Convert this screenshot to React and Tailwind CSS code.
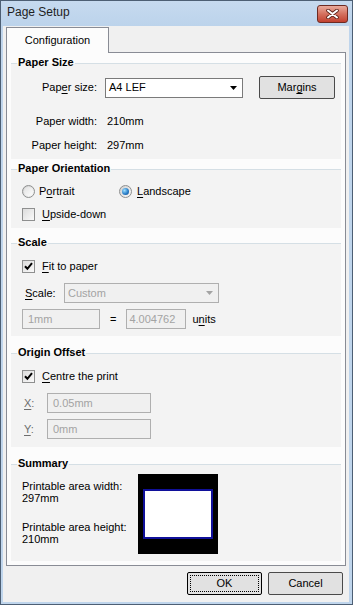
import React from "react"

const U = ({ children }) => <span className="underline decoration-1 underline-offset-[2px]">{children}</span>

const CheckBox = ({ checked }) => (
  <span className="flex h-[13px] w-[13px] shrink-0 items-center justify-center border border-[#8e8f8f] bg-white">
    <span className="flex h-[11px] w-[11px] items-center justify-center bg-gradient-to-br from-[#dcdcdc] to-[#fafafa]">
      {checked && (
        <svg width="9" height="9" viewBox="0 0 9 9">
          <path d="M1 4.2 L3.4 6.8 L8 1.2" fill="none" stroke="#000" strokeWidth="2" />
        </svg>
      )}
    </span>
  </span>
)

const Radio = ({ checked }) => (
  <span className="flex h-[13px] w-[13px] shrink-0 items-center justify-center rounded-full border border-[#8e8f8f] bg-gradient-to-br from-[#cfcfcf] to-[#fafafa]">
    {checked ? (
      <span className="h-[7px] w-[7px] rounded-full bg-[radial-gradient(circle_at_35%_35%,#9fe0ff,#2a7fc9_55%,#114a8a)]" />
    ) : (
      <span className="h-[9px] w-[9px] rounded-full bg-gradient-to-br from-[#e2e2e2] to-[#fdfdfd]" />
    )}
  </span>
)

const Group = ({ title, className, children }) => (
  <fieldset className={`min-w-0 border-t border-[#d5dfe5] bg-[#f3f3f3] ${className}`}>
    <legend className="ml-[6px] px-[1px] pb-[2px] text-[11px] leading-[13px] font-bold">{title}</legend>
    {children}
  </fieldset>
)

const Select = ({ value, disabled, className }) => (
  <div
    className={`flex h-[20px] items-center justify-between border ${
      disabled ? "border-[#afafaf] bg-[#f0f0f0] text-[#a3a3a3]" : "border-[#7a7a7a] bg-white text-black"
    } ${className}`}
  >
    <span className="pl-[3px]">{value}</span>
    <svg width="7" height="4" className="mr-[5px]">
      <path d="M0 0h7L3.5 4z" fill={disabled ? "#a3a3a3" : "#000"} />
    </svg>
  </div>
)

const TextBox = ({ value, className }) => (
  <div className={`flex h-[20px] items-center border border-[#afafaf] bg-[#f0f0f0] text-[#a3a3a3] ${className}`}>{value}</div>
)

const Button = ({ children, isDefault }) => (
  <div
    className={`flex h-[23px] w-[75px] items-center justify-center rounded-[2px] border bg-[#e1e1e1] ${
      isDefault ? "border-black p-[2px]" : "border-[#4a4a4a]"
    }`}
  >
    {isDefault ? (
      <div className="flex h-full w-full items-center justify-center border border-dotted border-black">{children}</div>
    ) : (
      children
    )}
  </div>
)

export default function App() {
  return (
    <div className="flex h-[605px] w-[353px] flex-col border border-[#4d5f74] bg-[#bfd5ec] font-['Liberation_Sans',Arial,sans-serif] text-[11px] text-black">
      {/* Title bar */}
      <div className="flex h-[25px] shrink-0 items-start justify-between bg-gradient-to-b from-[#c6daef] to-[#bcd3eb]">
        <span className="pl-[6px] pt-[4px] text-[12px] leading-[15px] text-[#1e1e1e]">Page Setup</span>
        <div className="mr-[4px] mt-[4px] flex h-[18px] w-[31px] items-center justify-center rounded-[3px] border border-[#6d2a22] bg-gradient-to-b from-[#e9aa9c] via-[#d4705e] to-[#c2402f]">
          <svg width="13" height="10" viewBox="0 0 13 10">
            <path d="M2 1.5 L11 8.5 M11 1.5 L2 8.5" stroke="#5b2119" strokeWidth="3.6" strokeLinecap="round" />
            <path d="M2 1.5 L11 8.5 M11 1.5 L2 8.5" stroke="#fff" strokeWidth="2" strokeLinecap="round" />
          </svg>
        </div>
      </div>

      {/* Client area */}
      <div className="mb-[2px] ml-[2px] mr-[3px] flex flex-1 flex-col bg-[#f0f0f0] px-[3px] pt-[1px]">
        {/* Tab strip */}
        <div className="relative z-10 flex h-[26px] w-[103px] items-center justify-center border-x border-t border-[#898c95] bg-[#fcfcfc]">
          Configuration
        </div>

        {/* Tab panel */}
        <div className="-mt-px flex h-[514px] flex-col border border-[#898c95] bg-[#fcfcfc] px-[4px] pt-[3px]">
          <Group title="Paper Size" className="h-[103px]">
            <div className="mt-[5px] flex h-[23px] items-center">
              <span className="w-[86px] text-right">
                Pap<U>e</U>r size:
              </span>
              <Select value="A4 LEF" className="ml-[8px] w-[138px]" />
              <div className="ml-[16px]">
                <div className="flex h-[23px] w-[76px] items-center justify-center rounded-[2px] border border-[#4a4a4a] bg-[#e1e1e1]">
                  Mar<U>g</U>ins
                </div>
              </div>
            </div>
            <div className="mt-[14px] flex h-[16px] items-center">
              <span className="w-[86px] text-right">Paper width:</span>
              <span className="ml-[10px]">210mm</span>
            </div>
            <div className="mt-[8px] flex h-[16px] items-center">
              <span className="w-[86px] text-right">Paper height:</span>
              <span className="ml-[10px]">297mm</span>
            </div>
          </Group>

          <Group title="Paper Orientation" className="mt-[3px] h-[66px]">
            <div className="mt-[6px] flex h-[16px] items-center pl-[11px]">
              <div className="flex w-[97px] items-center gap-[4px]">
                <Radio />
                <span>
                  P<U>o</U>rtrait
                </span>
              </div>
              <div className="flex items-center gap-[5px]">
                <Radio checked />
                <span>
                  <U>L</U>andscape
                </span>
              </div>
            </div>
            <div className="mt-[7px] flex h-[16px] items-center gap-[7px] pl-[11px]">
              <CheckBox />
              <span>
                <U>U</U>pside-down
              </span>
            </div>
          </Group>

          <Group title="Scale" className="mt-[8px] h-[100px]">
            <div className="mt-[7px] flex h-[16px] items-center gap-[7px] pl-[11px]">
              <CheckBox checked />
              <span>
                <U>F</U>it to paper
              </span>
            </div>
            <div className="mt-[9px] flex h-[20px] items-center pl-[14px]">
              <span className="w-[39px]">
                <U>S</U>cale:
              </span>
              <Select value="Custom" disabled className="w-[155px]" />
            </div>
            <div className="mt-[6px] flex h-[20px] items-center pl-[11px]">
              <TextBox value="1mm" className="w-[78px] pl-[5px]" />
              <span className="ml-[10px]">=</span>
              <TextBox value="4.004762" className="ml-[10px] w-[60px] pl-[2px]" />
              <span className="ml-[6px]">
                u<U>n</U>its
              </span>
            </div>
          </Group>

          <Group title="Origin Offset" className="mt-[10px] h-[101px]">
            <div className="mt-[7px] flex h-[16px] items-center gap-[7px] pl-[11px]">
              <CheckBox checked />
              <span>
                <U>C</U>entre the print
              </span>
            </div>
            <div className="mt-[9px] flex h-[20px] items-center pl-[13px]">
              <span className="w-[23px] text-[#6d6d6d]">
                <U>X</U>:
              </span>
              <TextBox value="0.05mm" className="w-[104px] pl-[5px]" />
            </div>
            <div className="mt-[6px] flex h-[20px] items-center pl-[13px]">
              <span className="w-[23px] text-[#6d6d6d]">
                <U>Y</U>:
              </span>
              <TextBox value="0mm" className="w-[104px] pl-[5px]" />
            </div>
          </Group>

          <Group title="Summary" className="mt-[10px] h-[104px]">
            <div className="mt-[2px] flex pl-[11px]">
              <div className="w-[116px] leading-[12px]">
                <div className="mt-[6px]">Printable area width:</div>
                <div>297mm</div>
                <div className="mt-[17px]">Printable area height:</div>
                <div>210mm</div>
              </div>
              <div className="flex h-[80px] w-[80px] items-center justify-center bg-black">
                <div className="h-[50px] w-[70px] border-2 border-[#10109a] bg-white" />
              </div>
            </div>
          </Group>
        </div>

        {/* Dialog buttons */}
        <div className="mt-[6px] flex justify-end gap-[6px] pr-[3px]">
          <Button isDefault>OK</Button>
          <Button>Cancel</Button>
        </div>
      </div>
    </div>
  )
}
